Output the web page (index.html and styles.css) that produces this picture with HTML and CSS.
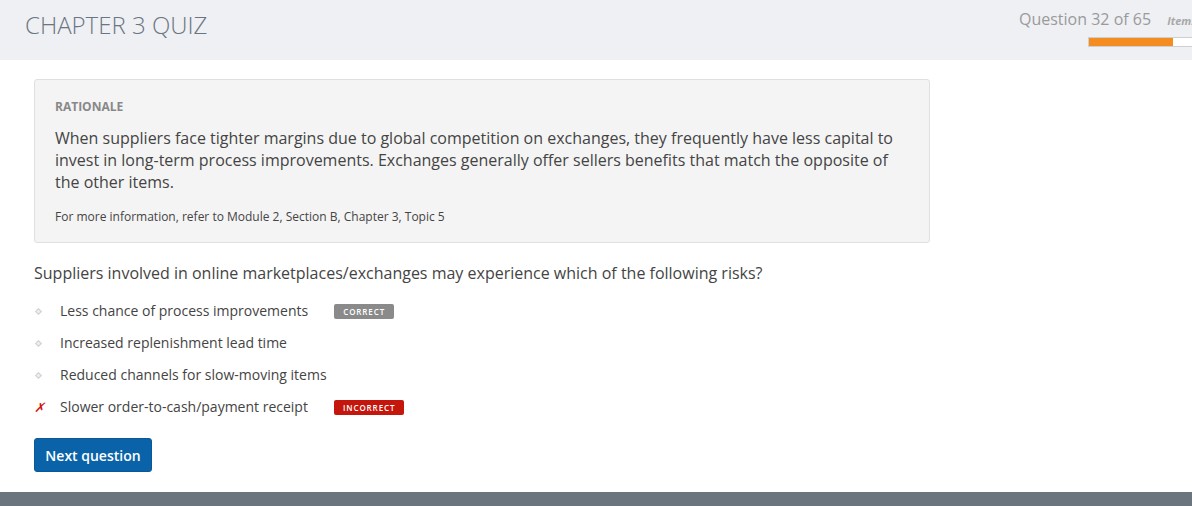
FILE: index.html
```html
<!DOCTYPE html>
<html>
<head>
<meta charset="utf-8">
<link rel="stylesheet" href="styles.css">
</head>
<body>
<header class="top">
  <h1 class="title">CHAPTER 3 QUIZ</h1>
  <div class="status">
    <div class="status-line"><span class="qcount">Question 32 of 65</span><span class="items">Items</span></div>
    <div class="progress"><div class="progress-fill" style="width:84px"></div></div>
  </div>
</header>
<main class="content">
  <section class="rationale">
    <div class="rationale-label">RATIONALE</div>
    <p class="rationale-text">When suppliers face tighter margins due to global competition on exchanges, they frequently have less capital to invest in long-term process improvements. Exchanges generally offer sellers benefits that match the opposite of the other items.</p>
    <p class="rationale-ref">For more information, refer to Module 2, Section B, Chapter 3, Topic 5</p>
  </section>
  <p class="question">Suppliers involved in online marketplaces/exchanges may experience which of the following risks?</p>
  <ul class="options">
    <li class="option"><span class="mark"><span class="diamond"></span></span><span class="opt-text">Less chance of process improvements</span><span class="badge badge-correct">CORRECT</span></li>
    <li class="option"><span class="mark"><span class="diamond"></span></span><span class="opt-text">Increased replenishment lead time</span></li>
    <li class="option"><span class="mark"><span class="diamond"></span></span><span class="opt-text">Reduced channels for slow-moving items</span></li>
    <li class="option"><span class="mark cross">✗</span><span class="opt-text">Slower order-to-cash/payment receipt</span><span class="badge badge-incorrect">INCORRECT</span></li>
  </ul>
  <button class="next-btn">Next question</button>
</main>
<footer class="bottom"></footer>
</body>
</html>
```

FILE: styles.css
```css
* { box-sizing: border-box; }
html, body { margin: 0; padding: 0; }
body {
  font-family: "Open Sans", "Liberation Sans", sans-serif;
  background: #fff;
  width: 1192px;
  height: 506px;
  overflow: hidden;
  display: flex;
  flex-direction: column;
}
.top {
  height: 60px;
  background: #eff0f4;
  display: flex;
  justify-content: space-between;
  align-items: flex-start;
  padding-left: 25px;
  flex-shrink: 0;
}
.title {
  margin: 9px 0 0;
  font-weight: 300;
  font-size: 24px;
  line-height: 32px;
  color: #6b7582;
  letter-spacing: 0;
}
.status {
  display: flex;
  flex-direction: column;
  align-items: flex-end;
  padding-top: 8px;
  width: 180px;
}
.status-line {
  display: flex;
  align-items: baseline;
  white-space: nowrap;
  width: 100%;
  padding-left: 7px;
}
.qcount {
  font-size: 16px;
  color: #9a9a9a;
  line-height: 22px;
}
.items {
  font-size: 11px;
  font-style: italic;
  font-weight: 700;
  color: #a8a8a8;
  margin-left: 16px;
}
.progress {
  margin-top: 7px;
  align-self: flex-start;
  margin-left: 76px;
  width: 110px;
  height: 10px;
  border: 1px solid #cfcfcf;
  background: #fff;
}
.progress-fill {
  height: 100%;
  background: #f58c1f;
}
.content {
  flex: 1;
  padding: 19px 0 0 34px;
}
.rationale {
  width: 896px;
  background: #f4f4f4;
  border: 1px solid #e0e0e0;
  border-radius: 3px;
  padding: 19px 20px 17px;
}
.rationale-label {
  font-size: 12px;
  font-weight: 700;
  color: #888;
  line-height: 16px;
}
.rationale-text {
  margin: 12px 0 0;
  font-size: 16px;
  line-height: 22px;
  color: #444;
}
.rationale-ref {
  margin: 16px 0 0;
  font-size: 12px;
  line-height: 16px;
  color: #444;
}
.question {
  margin: 19px 0 0;
  font-size: 16px;
  line-height: 22px;
  color: #444;
}
.options {
  list-style: none;
  margin: 11px 0 0;
  padding: 0;
}
.option {
  display: flex;
  align-items: center;
  height: 32px;
  font-size: 14px;
  color: #444;
}
.mark {
  width: 26px;
  display: flex;
  align-items: center;
  padding-left: 2px;
}
.diamond {
  width: 5px;
  height: 5px;
  border: 1px solid #d0d0d0;
  background: #eee;
  transform: rotate(45deg);
}
.cross {
  color: #d0160e;
  font-weight: 400;
  font-style: italic;
  font-size: 13px;
  padding-left: 0;
}
.opt-text { line-height: 20px; }
.badge {
  margin-left: 26px;
  font-size: 8px;
  font-weight: 600;
  letter-spacing: 0.9px;
  color: #fff;
  height: 15px;
  line-height: 15px;
  padding: 0 9px;
  border-radius: 2px;
}
.badge-correct { background: #8a8a8a; }
.badge-incorrect { background: #c4160c; }
.next-btn {
  margin-top: 15px;
  font-family: "Open Sans", "Liberation Sans", sans-serif;
  font-size: 14px;
  font-weight: 600;
  color: #fff;
  background: #0a63a8;
  border: 1px solid #0a5896;
  border-radius: 3px;
  height: 34px;
  width: 118px;
  padding: 0;
  cursor: pointer;
}
.bottom {
  height: 14px;
  background: #6b757d;
  flex-shrink: 0;
}
```
